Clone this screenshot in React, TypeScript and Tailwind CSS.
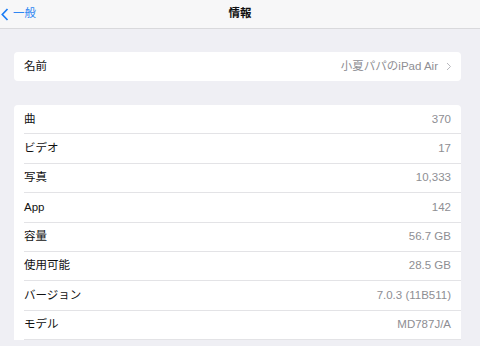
const font = { fontFamily: '"Liberation Sans", "Noto Sans CJK JP", sans-serif' };

const rows: { label: string; value: string }[] = [
  { label: "曲", value: "370" },
  { label: "ビデオ", value: "17" },
  { label: "写真", value: "10,333" },
  { label: "App", value: "142" },
  { label: "容量", value: "56.7 GB" },
  { label: "使用可能", value: "28.5 GB" },
  { label: "バージョン", value: "7.0.3 (11B511)" },
  { label: "モデル", value: "MD787J/A" },
];

export default function App() {
  return (
    <div className="w-[480px] h-[346px] overflow-hidden bg-[#efeff4]" style={font}>
      {/* nav bar */}
      <div className="relative h-[29px] bg-[#f7f7f8] border-b border-[#d9d9dc] flex items-center">
        <div className="flex items-center pl-[1px] text-[#2f86f2] text-[11.5px]">
          <svg width="8" height="13" viewBox="0 0 8 13" className="mr-[4px]">
            <path d="M6.5 1 L1.3 6.5 L6.5 12" fill="none" stroke="#1a7cf5" strokeWidth="1.7" />
          </svg>
          <span>一般</span>
        </div>
        <div className="absolute left-0 right-0 text-center text-[11.5px] font-bold text-[#111]">情報</div>
      </div>

      <div className="px-[14px] pr-[19px] pt-[23px]">
        <div className="bg-white rounded-[4px] h-[29px] flex items-center pl-[10px] pr-[9px] text-[11.5px]">
          <span className="text-[#111]">名前</span>
          <span className="ml-auto text-[#8e8e93]">小夏パパのiPad Air</span>
          <svg width="6" height="9" viewBox="0 0 6 9" className="ml-[8px]">
            <path d="M1 1 L4.5 4.5 L1 8" fill="none" stroke="#b8b8bd" strokeWidth="1" />
          </svg>
        </div>

        <div className="bg-white rounded-t-[4px] mt-[24px] pl-[10px]">
          {rows.map((r) => (
            <div
              key={r.label}
              className="h-[29.375px] flex items-center pr-[10px] text-[11.5px] border-b border-[#e3e3e6]"
            >
              <span className="text-[#111]">{r.label}</span>
              <span className="ml-auto text-[#8e8e93]">{r.value}</span>
            </div>
          ))}
        </div>
      </div>
    </div>
  );
}
